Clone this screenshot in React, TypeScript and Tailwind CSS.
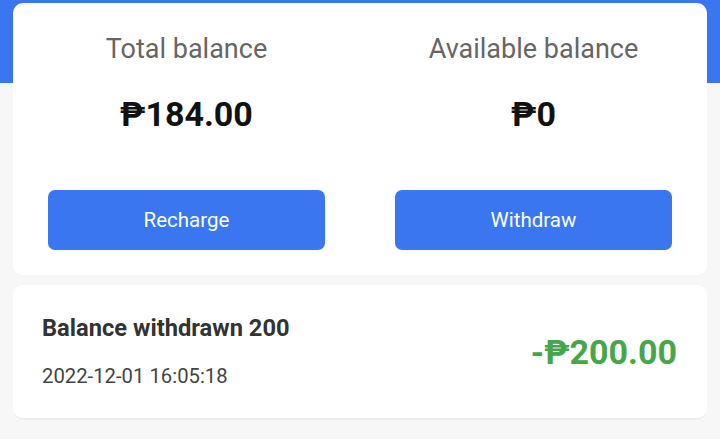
const BLUE = "bg-[#3a76f0]";

function BalanceColumn({
  label,
  amount,
  action,
}: {
  label: string;
  amount: string;
  action: string;
}) {
  return (
    <div className="flex flex-col items-center px-[35px] pt-[29px]">
      <div className="text-[27px] leading-[34px] text-[#666666]">{label}</div>
      <div className="mt-[28px] text-[34px] leading-[40px] font-bold text-[#111111]">
        {amount}
      </div>
      <button
        className={`mt-[56px] h-[60px] w-full rounded-[7px] ${BLUE} text-[20.5px] text-white`}
      >
        {action}
      </button>
    </div>
  );
}

export default function App() {
  return (
    <div
      className="relative h-[439px] w-[720px] overflow-hidden bg-[#f7f7f7]"
      style={{ fontFamily: "Roboto, 'Noto Sans', sans-serif" }}
    >
      <div className={`absolute inset-x-0 top-0 h-[83px] ${BLUE}`} />
      <div className="relative px-[13px] pt-[3px]">
        <div className="grid grid-cols-2 rounded-[10px] bg-white pb-[25px]">
          <BalanceColumn label="Total balance" amount="₱184.00" action="Recharge" />
          <BalanceColumn label="Available balance" amount="₱0" action="Withdraw" />
        </div>

        <div className="mt-[10px] flex h-[135px] items-center justify-between rounded-[10px] border-b-2 border-[#ececec] bg-white pl-[29px] pr-[30px]">
          <div className="flex flex-col pb-[2px]">
            <div className="text-[23.7px] leading-[30px] font-bold text-[#333333]">
              Balance withdrawn 200
            </div>
            <div className="mt-[20px] text-[20.3px] leading-[26px] text-[#444444]">
              2022-12-01 16:05:18
            </div>
          </div>
          <div className="text-[34px] leading-[40px] font-bold text-[#46a64a]">
            -₱200.00
          </div>
        </div>
      </div>
    </div>
  );
}
